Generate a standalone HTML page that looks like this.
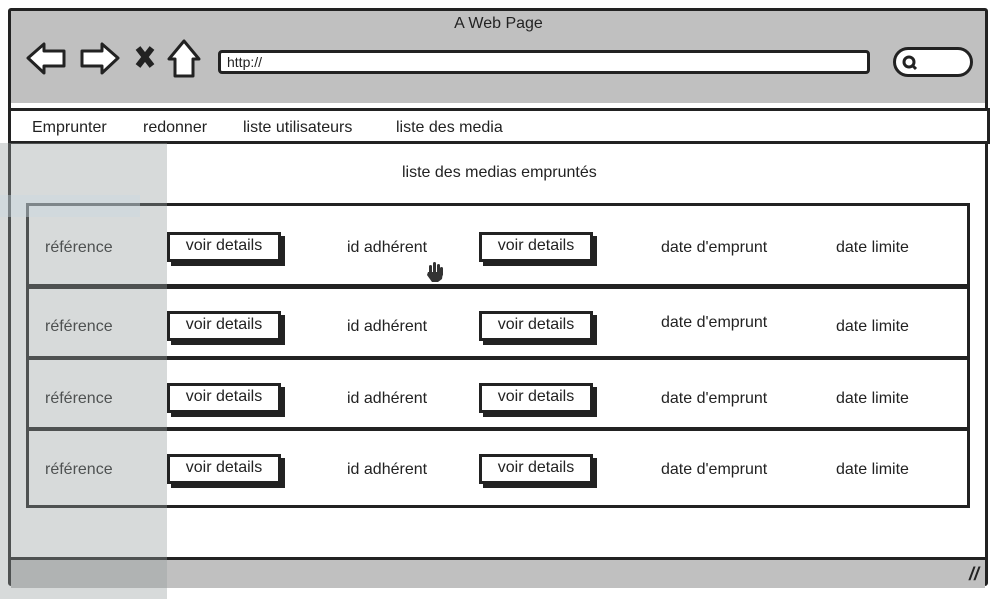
<!DOCTYPE html>
<html><head><meta charset="utf-8"><style>
body{margin:0;width:997px;height:599px;background:#fff;position:relative;overflow:hidden;font-family:"Liberation Sans",sans-serif;color:#222}
.a{position:absolute}
.frame{left:8px;top:8px;width:980px;height:578px;border:3px solid #222;border-radius:3px;box-sizing:border-box}
.tool{left:11px;top:11px;width:974px;height:92px;background:#c0c0c0}
.nav{left:8px;top:108px;width:982px;height:36px;border:3px solid #222;box-sizing:border-box;background:#fff}
.nav span{position:absolute;top:8px;font-size:16px}
.url{left:218px;top:50px;width:652px;height:24px;border:3px solid #222;border-radius:4px;background:#fff;box-sizing:border-box;font-size:14px;padding:0 6px;line-height:18px}
.search{left:893px;top:47px;width:80px;height:30px;border:3px solid #222;border-radius:16px;background:#fff;box-sizing:border-box}
.bot{left:11px;top:557px;width:974px;height:28px;background:#c0c0c0;border-top:3px solid #222}
.row{left:26px;width:944px;border:3px solid #222;box-sizing:border-box;background:#fff}
.t{position:absolute;font-size:16px}
.btn{position:absolute;width:114px;height:30px;border:3px solid #222;box-sizing:border-box;background:#fff;box-shadow:4px 4px 0 #222;font-size:16px;text-align:center;line-height:22px}
.ov{left:0;top:143px;width:167px;height:456px;background:rgba(150,158,158,0.38)}
</style></head><body>
<div class="a tool"></div>
<div class="a frame"></div>
<div class="a" style="left:0;width:997px;top:15px;text-align:center;font-size:16px">A Web Page</div>
<svg class="a" style="left:24px;top:36px" width="180" height="48" viewBox="0 0 180 48" fill="#fff" stroke="#222" stroke-width="3" stroke-linejoin="round">
<path d="M4 22 L20 8 L20 15 L40 15 L40 30 L20 30 L20 37 Z"/>
<path d="M94 22 L78 8 L78 15 L58 15 L58 30 L78 30 L78 37 Z"/>
<path d="M114 12 L128 30 M128 12 L114 30" stroke-width="6" fill="none"/>
<path d="M160 5 L145 23 L151 23 L151 40 L169 40 L169 23 L175 23 Z"/>
</svg>
<div class="a url">http://</div>
<div class="a search"><svg width="20" height="20" style="margin:3px 0 0 5px"><circle cx="8" cy="9" r="5" fill="none" stroke="#222" stroke-width="3"/><path d="M11 12 L15 16" stroke="#222" stroke-width="3"/></svg></div>
<div class="a nav"><span style="left:21px">Emprunter</span><span style="left:132px">redonner</span><span style="left:232px">liste utilisateurs</span><span style="left:385px">liste des media</span></div>
<div class="a" style="left:402px;top:164px;font-size:16px">liste des medias empruntés</div>
<div class="a row" style="top:203px;height:84px"><span class="t" style="left:16px;top:33px">référence</span><div class="btn" style="left:138px;top:26px">voir details</div><span class="t" style="left:318px;top:33px">id adhérent</span><div class="btn" style="left:450px;top:26px">voir details</div><span class="t" style="left:632px;top:33px">date d'emprunt</span><span class="t" style="left:807px;top:33px">date limite</span></div>
<div class="a row" style="top:286px;height:73px"><span class="t" style="left:16px;top:29px">référence</span><div class="btn" style="left:138px;top:22px">voir details</div><span class="t" style="left:318px;top:29px">id adhérent</span><div class="btn" style="left:450px;top:22px">voir details</div><span class="t" style="left:632px;top:25px">date d'emprunt</span><span class="t" style="left:807px;top:29px">date limite</span></div>
<div class="a row" style="top:357px;height:73px"><span class="t" style="left:16px;top:30px">référence</span><div class="btn" style="left:138px;top:23px">voir details</div><span class="t" style="left:318px;top:30px">id adhérent</span><div class="btn" style="left:450px;top:23px">voir details</div><span class="t" style="left:632px;top:30px">date d'emprunt</span><span class="t" style="left:807px;top:30px">date limite</span></div>
<div class="a row" style="top:428px;height:80px"><span class="t" style="left:16px;top:30px">référence</span><div class="btn" style="left:138px;top:23px">voir details</div><span class="t" style="left:318px;top:30px">id adhérent</span><div class="btn" style="left:450px;top:23px">voir details</div><span class="t" style="left:632px;top:30px">date d'emprunt</span><span class="t" style="left:807px;top:30px">date limite</span></div>
<svg class="a" style="left:426px;top:261px" width="18" height="22" viewBox="0 0 18 22" fill="#333"><rect x="3" y="4" width="3" height="10" rx="1.5"/><rect x="7" y="1" width="3" height="12" rx="1.5"/><rect x="11" y="3" width="3" height="11" rx="1.5"/><rect x="14" y="6" width="3" height="9" rx="1.5"/><path d="M3 11 L17 11 L16 18 L12 21 L6 21 L1 14 L2 11Z"/></svg>
<div class="a bot"><span style="position:absolute;right:6px;top:4px;font-size:18px;font-weight:bold;font-style:italic">//</span></div>
<div class="a ov"></div>
<div class="a" style="left:0;top:195px;width:140px;height:22px;background:rgba(200,215,225,0.4)"></div>
</body></html>
